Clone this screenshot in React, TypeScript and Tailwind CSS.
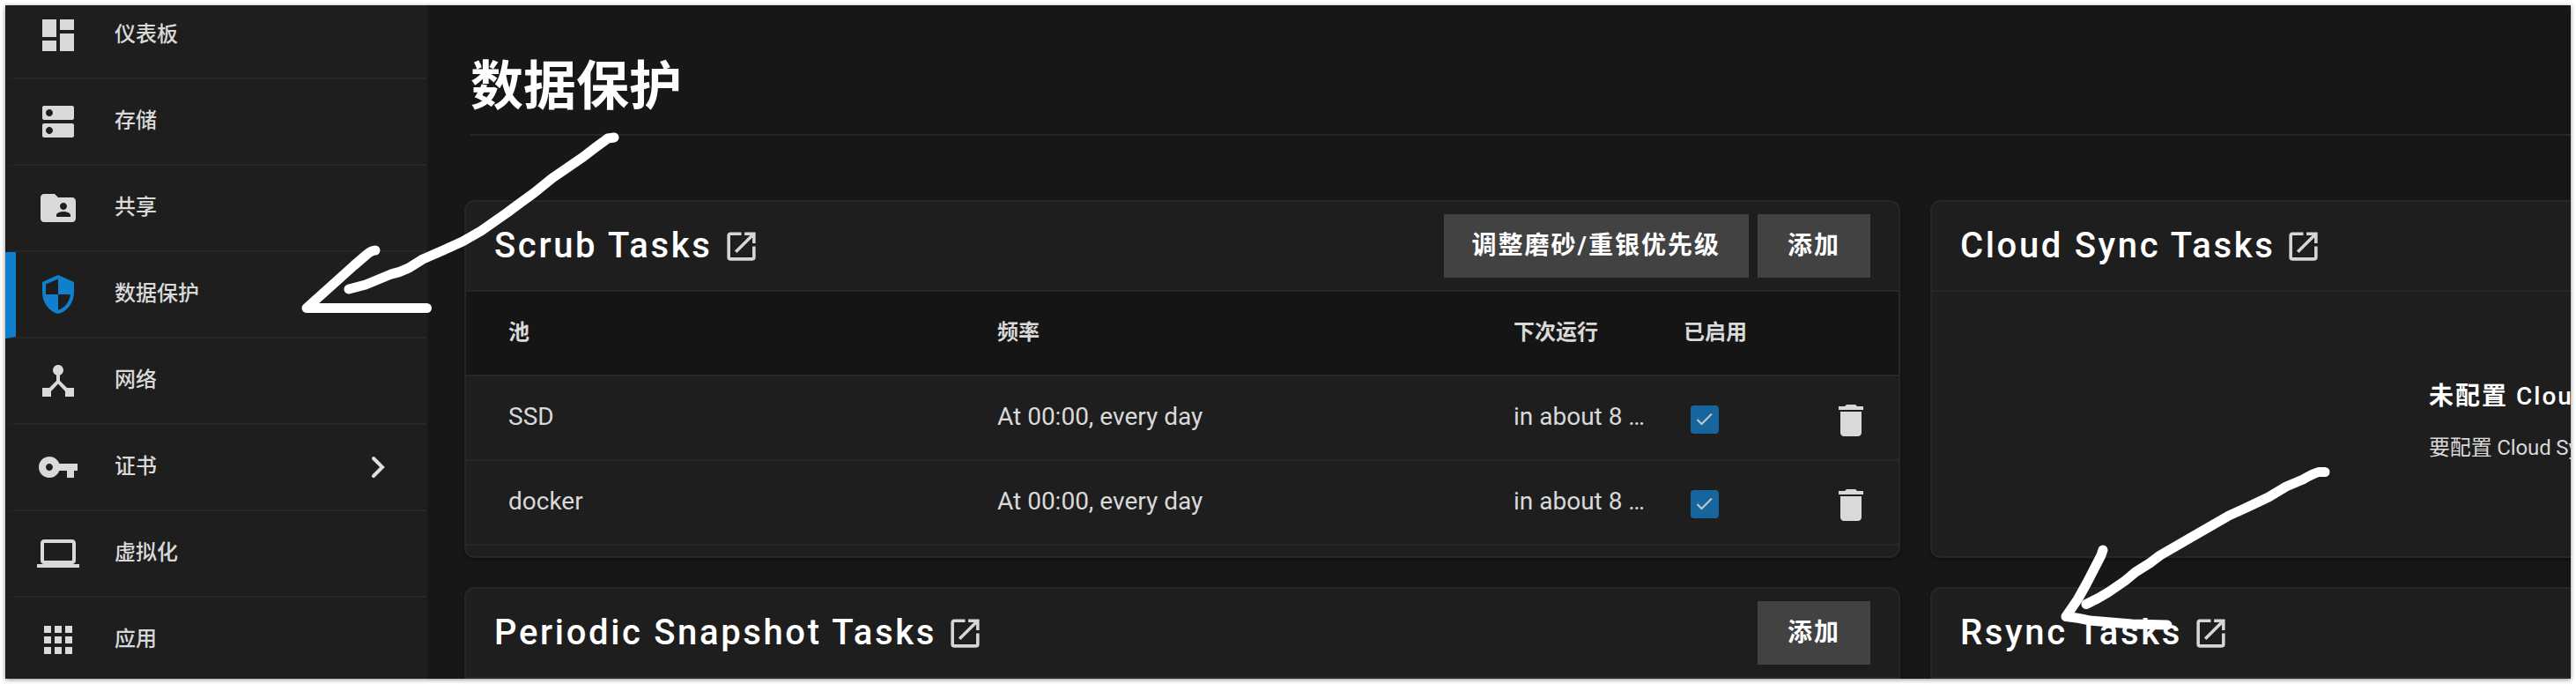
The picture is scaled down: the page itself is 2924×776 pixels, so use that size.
import React from "react";

const F = "font-['Roboto','Noto_Sans_CJK_SC',sans-serif]";

type IconProps = { d: string; className?: string };
function Icon({ d, className = "" }: IconProps) {
  return (
    <svg viewBox="0 0 24 24" className={`shrink-0 fill-current ${className}`}>
      <path fillRule="evenodd" d={d} />
    </svg>
  );
}

const P = {
  dashboard: "M3 13h8V3H3v10zm0 8h8v-6H3v6zm10 0h8V11h-8v10zm0-18v6h8V3h-8z",
  storage:
    "M20 13H4c-.55 0-1 .45-1 1v6c0 .55.45 1 1 1h16c.55 0 1-.45 1-1v-6c0-.55-.45-1-1-1zM7 19c-1.1 0-2-.9-2-2s.9-2 2-2 2 .9 2 2-.9 2-2 2zM20 3H4c-.55 0-1 .45-1 1v6c0 .55.45 1 1 1h16c.55 0 1-.45 1-1V4c0-.55-.45-1-1-1zM7 9c-1.1 0-2-.9-2-2s.9-2 2-2 2 .9 2 2-.9 2-2 2z",
  share:
    "M20 6h-8l-2-2H4c-1.100 0-2 .9-2 2v12c0 1.100.9 2 2 2h16c1.100 0 2-.9 2-2V8c0-1.100-.9-2-2-2zm-5 3c1.100 0 2 .9 2 2s-.9 2-2 2-2-.9-2-2 .9-2 2-2zm4 8h-8v-1c0-1.330 2.670-2 4-2s4 .67 4 2v1z",
  shield:
    "M12 1L3 5v6c0 5.550 3.840 10.740 9 12 5.160-1.260 9-6.450 9-12V5l-9-4zm0 10.990h7c-.53 4.120-3.280 7.790-7 8.940V12H5V6.300l7-3.110v8.800z",
  network:
    "M17 16l-4-4V8.820C14.160 8.400 15 7.300 15 6c0-1.660-1.340-3-3-3S9 4.340 9 6c0 1.300.84 2.400 2 2.820V12l-4 4H3v5h5v-3.050l4-4.200 4 4.200V21h5v-5h-4z",
  key: "M12.650 10C11.830 7.670 9.610 6 7 6c-3.310 0-6 2.690-6 6s2.690 6 6 6c2.610 0 4.830-1.670 5.650-4H17v4h4v-4h2v-4H12.650zM7 14c-1.100 0-2-.9-2-2s.9-2 2-2 2 .9 2 2-.9 2-2 2z",
  laptop:
    "M20 18c1.100 0 1.990-.9 1.990-2L22 6c0-1.100-.9-2-2-2H4c-1.100 0-2 .9-2 2v10c0 1.100.9 2 2 2H0v2h24v-2h-4zM4 6h16v10H4V6z",
  apps: "M4 8h4V4H4v4zm6 12h4v-4h-4v4zm-6 0h4v-4H4v4zm0-6h4v-4H4v4zm6 0h4v-4h-4v4zm6-10v4h4V4h-4zm-6 4h4V4h-4v4zm6 6h4v-4h-4v4zm0 6h4v-4h-4v4z",
  open: "M14,3V5H17.59L7.76,14.83L9.17,16.24L19,6.41V10H21V3M19,19H5V5H12V3H5C3.89,3 3,3.9 3,5V19A2,2 0 0,0 5,21H19A2,2 0 0,0 21,19V12H19V19Z",
  trash: "M6 19c0 1.100.9 2 2 2h8c1.100 0 2-.9 2-2V7H6v12zM19 4h-3.500l-1-1h-5l-1 1H5v2h14V4z",
};

const nav = [
  { label: "仪表板", icon: P.dashboard },
  { label: "存储", icon: P.storage },
  { label: "共享", icon: P.share },
  { label: "数据保护", icon: P.shield, active: true },
  { label: "网络", icon: P.network },
  { label: "证书", icon: P.key, expandable: true },
  { label: "虚拟化", icon: P.laptop },
  { label: "应用", icon: P.apps },
];

function Sidebar() {
  return (
    <nav className="w-[480px] shrink-0 overflow-hidden border-r-2 border-[#1a1a1a] bg-[#1e1e1e]">
      <ul className="-mt-[14px]">
        {nav.map((n) => (
          <li
            key={n.label}
            className={`flex h-[98px] items-center border-b-2 border-l-[12px] border-b-[#272727] pl-6 pr-[30px] ${
              n.active ? "border-l-[#1080cd]" : "border-l-transparent"
            }`}
          >
            <Icon d={n.icon} className={`size-12 ${n.active ? "text-[#1080cd]" : "text-[#d9d9d9]"}`} />
            <span className="ml-10 grow pb-[3px] text-2xl font-medium text-[#d9d9d9]">{n.label}</span>
            {n.expandable && (
              <svg viewBox="0 0 48 48" className="size-12 fill-none stroke-[#e0e0e0] stroke-[4]">
                <path strokeLinecap="round" d="M18 14l10 10-10 10" />
              </svg>
            )}
          </li>
        ))}
      </ul>
    </nav>
  );
}

function Button({ children }: { children: React.ReactNode }) {
  return (
    <button className="h-[72px] min-w-32 bg-[#424242] px-8 text-[28px] font-bold tracking-[2px] text-white">
      {children}
    </button>
  );
}

function CardHeader({ title, children }: { title: string; children?: React.ReactNode }) {
  return (
    <div className="flex h-[102px] shrink-0 items-center border-b-2 border-[#272727] px-8">
      <h3 className="text-[40px] font-medium tracking-[2.65px] text-white">{title}</h3>
      <Icon d={P.open} className="ml-[11px] size-[43px] text-[#d6d6d6]" />
      <div className="ml-auto flex gap-2.5">{children}</div>
    </div>
  );
}

const card =
  "flex flex-col overflow-hidden rounded-xl border-2 border-[#272727] bg-[#1e1e1e] shadow-[0_2px_4px_rgba(0,0,0,0.4)]";
const cols = "grid grid-cols-[555px_586px_193px_auto] items-center border-b-2 border-[#272727] pl-12 pr-[30px]";

function Row({ pool }: { pool: string }) {
  return (
    <div className={`${cols} h-24 text-[28px] text-[#d9d9d9]`}>
      <span className="pb-0.5">{pool}</span>
      <span className="pb-0.5">At 00:00, every day</span>
      <span className="pb-0.5">in about 8 …</span>
      <div className="flex items-center justify-between pl-2 pt-1">
        <span className="flex size-8 items-center justify-center rounded bg-[#17659d]">
          <svg viewBox="0 0 24 24" className="size-6 fill-none stroke-[#c8c8c8] stroke-2">
            <path d="M3.500 12l5 5L20 5.500" />
          </svg>
        </span>
        <Icon d={P.trash} className="mt-0.5 size-12" />
      </div>
    </div>
  );
}

export default function App() {
  return (
    <div className={`relative h-[776px] w-[2924px] overflow-hidden bg-white p-1.5 ${F}`}>
      <div className="flex h-[764px] overflow-hidden bg-[#171717] shadow-[0_1px_5px_rgba(0,0,0,0.45)]">
        <Sidebar />
        <main className="h-[764px] grow overflow-hidden pl-[41px]">
          <header className="ml-[7px] flex h-[148px] items-end border-b-2 border-[#272727] pb-[11px]">
            <h1 className="text-[60px] font-bold leading-[84px] text-white">数据保护</h1>
          </header>
          <div className="mt-[73px] grid w-[3300px] grid-cols-[1630px_1630px] grid-rows-[406px_300px] gap-x-[34px] gap-y-[33px]">
            <section className={card}>
              <CardHeader title="Scrub Tasks">
                <Button>调整磨砂/重银优先级</Button>
                <Button>添加</Button>
              </CardHeader>
              <div className={`${cols} h-24 bg-[#151515] text-2xl font-bold text-[#d9d9d9]`}>
                <span className="pb-0.5">池</span>
                <span className="pb-0.5">频率</span>
                <span className="pb-0.5">下次运行</span>
                <span className="pb-0.5">已启用</span>
              </div>
              <Row pool="SSD" />
              <Row pool="docker" />
            </section>
            <section className={card}>
              <CardHeader title="Cloud Sync Tasks" />
              <div className="pl-[564px] pt-[99px]">
                <h4 className="whitespace-nowrap text-[28px] font-bold leading-10 tracking-[2px] text-white">
                  未配置 <span className="font-medium">Clou</span>
                </h4>
                <p className="mt-5 whitespace-nowrap text-2xl leading-9 tracking-[-0.15px] text-[#d9d9d9]">
                  要配置 Cloud Sy
                </p>
              </div>
            </section>
            <section className={card}>
              <CardHeader title="Periodic Snapshot Tasks">
                <Button>添加</Button>
              </CardHeader>
            </section>
            <section className={card}>
              <CardHeader title="Rsync Tasks" />
            </section>
          </div>
        </main>
      </div>
      <svg
        viewBox="0 0 2924 776"
        className="absolute left-0 top-0 h-[776px] w-[2924px] fill-none stroke-white stroke-[11]"
        strokeLinecap="round"
        strokeLinejoin="round"
      >
        <path d="M697 156L690 157Q676 167 662 178L627 202L606 219Q592 229 576 241L546 262L525 274L503 284L480 294L464 304Q454 309 444 311L415 323L396 328" />
        <path d="M426 284Q422 284 416 289L402 301L348 349.500L484.500 349.500" />
        <path d="M2639 535.500L2632 535.500Q2626 537 2614 544L2595 552L2575 564Q2550 576 2530 585L2490 608L2452 630L2440 639L2424 649L2412 659L2393 672L2381 679L2368 685.500" />
        <path d="M2387 624L2385 630L2369 661L2359 679Q2353 688 2345 699.500Q2360 701 2372 704L2420 708L2460 709" />
      </svg>
    </div>
  );
}
